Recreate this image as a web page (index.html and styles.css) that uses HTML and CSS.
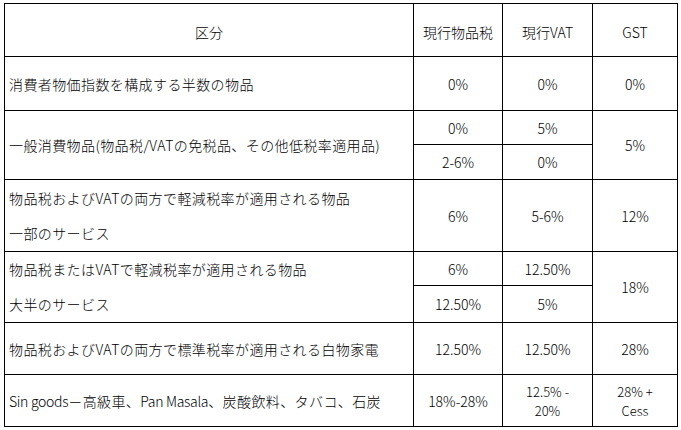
FILE: index.html
```html
<!DOCTYPE html>
<html lang="ja">
<head>
<meta charset="utf-8">
<link rel="stylesheet" href="styles.css">
</head>
<body>
<table class="tax">
  <colgroup>
    <col class="c1"><col class="c2"><col class="c3"><col class="c4">
  </colgroup>
  <tr class="h53">
    <th>区分</th><th>現行物品税</th><th>現行VAT</th><th>GST</th>
  </tr>
  <tr class="h54">
    <td class="lbl">消費者物価指数を構成する半数の物品</td><td>0%</td><td>0%</td><td>0%</td>
  </tr>
  <tr class="h34">
    <td class="lbl" rowspan="2">一般消費物品(物品税/VATの免税品、その他低税率適用品)</td><td>0%</td><td>5%</td><td rowspan="2">5%</td>
  </tr>
  <tr class="h35">
    <td>2-6%</td><td>0%</td>
  </tr>
  <tr class="h71">
    <td class="lbl"><div class="ln a">物品税およびVATの両方で軽減税率が適用される物品</div><div class="ln b">一部のサービス</div></td><td>6%</td><td>5-6%</td><td>12%</td>
  </tr>
  <tr class="h34">
    <td class="lbl" rowspan="2"><div class="ln c">物品税またはVATで軽減税率が適用される物品</div><div class="ln d">大半のサービス</div></td><td>6%</td><td>12.50%</td><td rowspan="2">18%</td>
  </tr>
  <tr class="h36">
    <td>12.50%</td><td>5%</td>
  </tr>
  <tr class="h52">
    <td class="lbl">物品税およびVATの両方で標準税率が適用される白物家電</td><td>12.50%</td><td>12.50%</td><td>28%</td>
  </tr>
  <tr class="h52">
    <td class="lbl"><span class="lat">Sin goods</span>－高級車、<span class="lat">Pan Masala</span>、炭酸飲料、タバコ、石炭</td><td>18%-28%</td><td class="tight"><div class="tl">12.5% -</div><div class="tl">20%</div></td><td class="tight"><div class="tl">28% +</div><div class="tl">Cess</div></td>
  </tr>
</table>
</body>
</html>
```

FILE: styles.css
```css
html, body {
  margin: 0;
  padding: 0;
  background: #fff;
}
body {
  padding: 3px 0 0 4px;
  font-family: "Noto Sans CJK JP", "Noto Sans", sans-serif;
  font-size: 14px;
  font-weight: 300;
  color: #000;
}
.tax {
  border-collapse: collapse;
  table-layout: fixed;
  width: 673px;
}
.c1 { width: 409px; }
.c2 { width: 89px; }
.c3 { width: 90px; }
.c4 { width: 85px; }
.tax th, .tax td {
  border: 1px solid #000;
  padding: 0;
  text-align: center;
  vertical-align: middle;
  font-weight: 300;
  line-height: 18px;
  white-space: nowrap;
}
.tax td.lbl {
  text-align: left;
  padding-left: 4px;
  letter-spacing: 0.4px;
}
.tax th { padding-top: 4px; }
.tl {
  height: 19px;
  line-height: 19px;
  font-size: 13px;
}
.lat {
  letter-spacing: -0.3px;
}
.h53 { height: 53px; }
.h54 { height: 54px; }
.h34 { height: 34px; }
.h35 { height: 35px; }
.h36 { height: 36px; }
.h52 { height: 52px; }
.h71 { height: 71px; }
.ln {
  display: flex;
  align-items: center;
}
.ln.a { height: 35px; }
.ln.b { height: 36px; }
.ln.c { height: 34px; }
.ln.d { height: 36px; }
```
